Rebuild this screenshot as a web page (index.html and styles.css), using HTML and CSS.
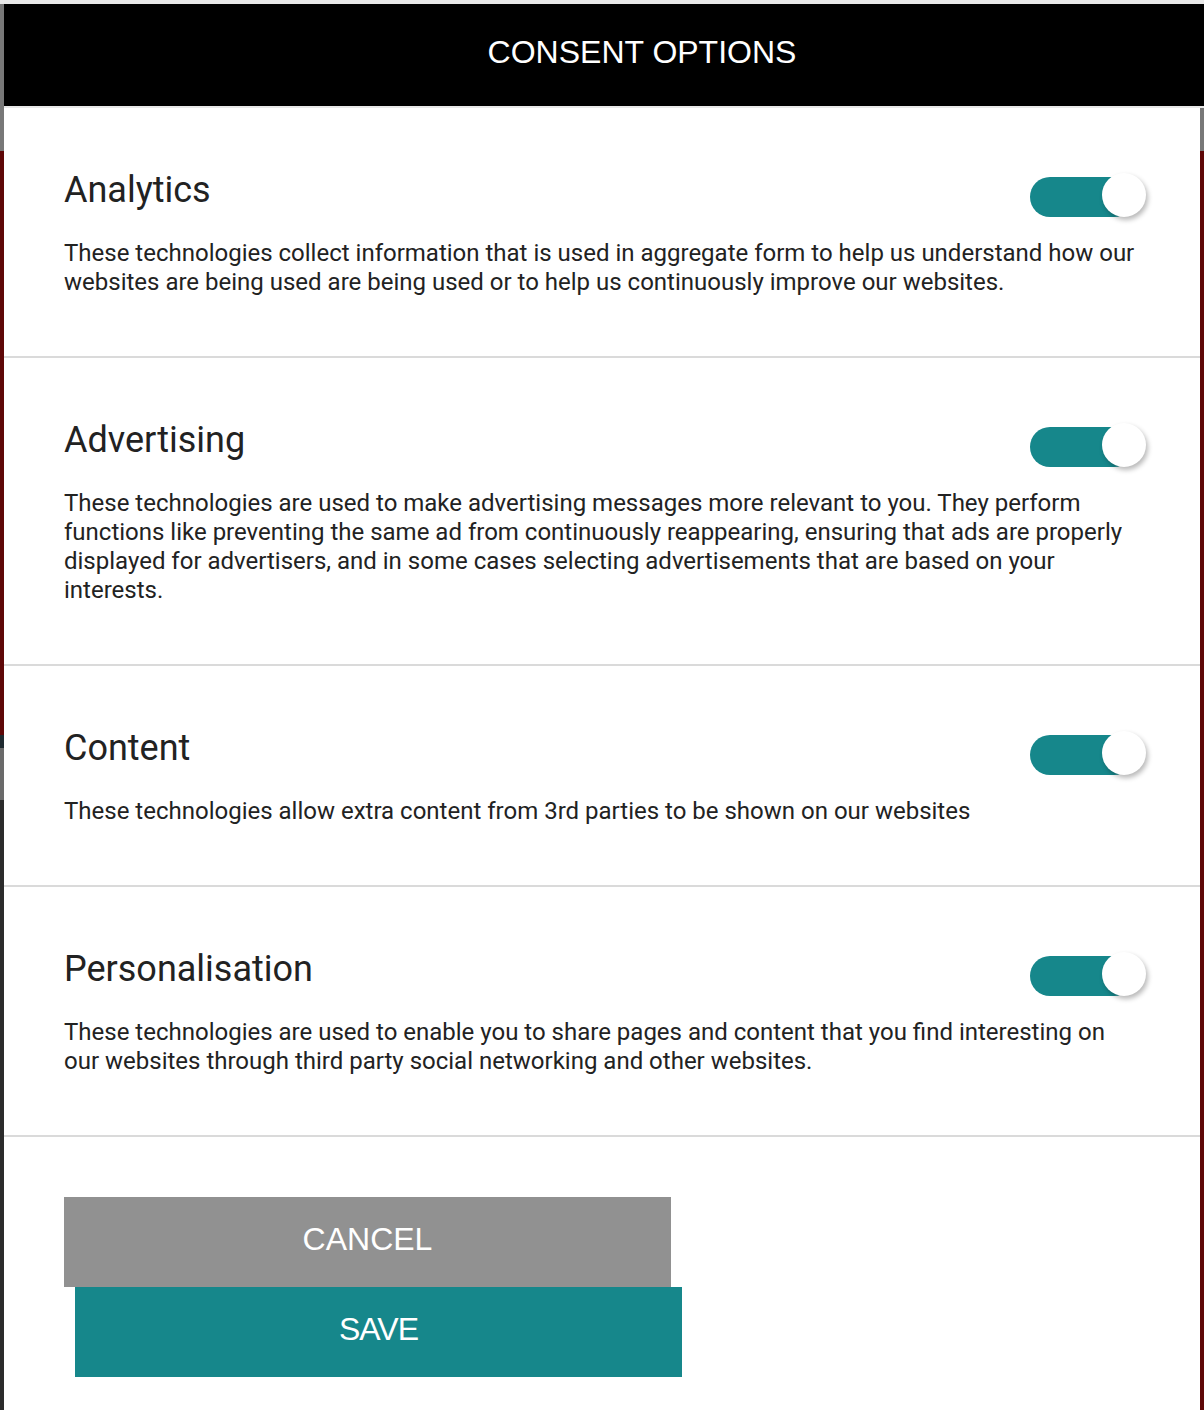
FILE: index.html
```html
<!DOCTYPE html>
<html lang="en">
<head>
<meta charset="utf-8">
<title>Consent Options</title>
<link rel="stylesheet" href="styles.css">
</head>
<body>
<div class="modal">
  <header class="modal-header">
    <h1 class="modal-title">CONSENT OPTIONS</h1>
  </header>
  <div class="modal-body">
    <section class="option">
      <div class="option-head">
        <h2 class="option-title">Analytics</h2>
        <span class="toggle"><span class="toggle-track"></span><span class="toggle-knob"></span></span>
      </div>
      <p class="option-text">These technologies collect information that is used in aggregate form to help us understand how our websites are being used are being used or to help us continuously improve our websites.</p>
    </section>
    <section class="option">
      <div class="option-head">
        <h2 class="option-title">Advertising</h2>
        <span class="toggle"><span class="toggle-track"></span><span class="toggle-knob"></span></span>
      </div>
      <p class="option-text">These technologies are used to make advertising messages more relevant to you. They perform functions like preventing the same ad from continuously reappearing, ensuring that ads are properly displayed for advertisers, and in some cases selecting advertisements that are based on your interests.</p>
    </section>
    <section class="option">
      <div class="option-head">
        <h2 class="option-title">Content</h2>
        <span class="toggle"><span class="toggle-track"></span><span class="toggle-knob"></span></span>
      </div>
      <p class="option-text">These technologies allow extra content from 3rd parties to be shown on our websites</p>
    </section>
    <section class="option">
      <div class="option-head">
        <h2 class="option-title">Personalisation</h2>
        <span class="toggle"><span class="toggle-track"></span><span class="toggle-knob"></span></span>
      </div>
      <p class="option-text">These technologies are used to enable you to share pages and content that you find interesting on our websites through third party social networking and other websites.</p>
    </section>
    <div class="actions">
      <button class="btn btn-cancel" type="button">CANCEL</button>
      <button class="btn btn-save" type="button">SAVE</button>
    </div>
  </div>
</div>
</body>
</html>
```

FILE: styles.css
```css
* { box-sizing: border-box; }

html {
  background:
    linear-gradient(to bottom, #e9e9e9 0 4px, #787878 4px 151px, #5e0707 151px 735px, #1f2a30 735px 748px, #6a6a6a 748px 800px, #2b2b2b 800px 1410px) 0 0 / 4px 100% no-repeat,
    linear-gradient(to bottom, #e9e9e9 0 4px, #787878 4px 151px, #5e0707 151px);
  min-height: 100%;
}

body {
  margin: 0;
  padding-top: 4px;
  font-family: Roboto, "Noto Sans", Arial, sans-serif;
  color: #222;
}

.modal {
  margin-left: 4px;
  width: 1200px;
}

.modal-header {
  height: 104px;
  background: #000;
  border-bottom: 2px solid #e8e8e8;
  display: flex;
  align-items: center;
  justify-content: center;
  padding-left: 76px;
  padding-bottom: 6px;
}

.modal-title {
  margin: 0;
  font-family: "Liberation Sans", Arial, Helvetica, sans-serif;
  font-weight: 400;
  font-size: 32px;
  color: #fff;
  line-height: 37px;
}

.modal-body {
  width: 1196px;
  background: #fff;
  padding-bottom: 33px;
}

.option {
  padding: 61px 60px 59px;
  border-bottom: 2px solid #dadada;
}

.option-head {
  display: flex;
  justify-content: space-between;
  align-items: flex-start;
  height: 42px;
}

.option-title {
  margin: 0;
  font-size: 36px;
  line-height: 42px;
  font-weight: 400;
  color: #222;
}

.toggle {
  position: relative;
  display: block;
  width: 116px;
  height: 44px;
  margin-top: 4px;
  margin-right: -6px;
}

.toggle-track {
  position: absolute;
  left: 0;
  top: 4px;
  width: 104px;
  height: 40px;
  border-radius: 20px;
  background: #16878b;
}

.toggle-knob {
  position: absolute;
  left: 72px;
  top: 0;
  width: 44px;
  height: 44px;
  border-radius: 50%;
  background: #fff;
  box-shadow: 2px 3px 5px rgba(0, 0, 0, 0.28);
}

.option-text {
  margin: 28px 0 0;
  font-size: 24px;
  line-height: 29px;
  color: #222;
}

.actions {
  padding: 60px 0 0 60px;
  display: flex;
  flex-direction: column;
  align-items: flex-start;
}

.btn {
  display: block;
  width: 607px;
  height: 90px;
  border: 0;
  margin: 0;
  padding: 0 0 6px;
  font-family: "Liberation Sans", Arial, Helvetica, sans-serif;
  font-size: 32px;
  color: #fff;
  cursor: pointer;
}

.btn-cancel {
  background: #919191;
}

.btn-save {
  background: #16878b;
  margin-left: 11px;
  letter-spacing: -1px;
}
```
